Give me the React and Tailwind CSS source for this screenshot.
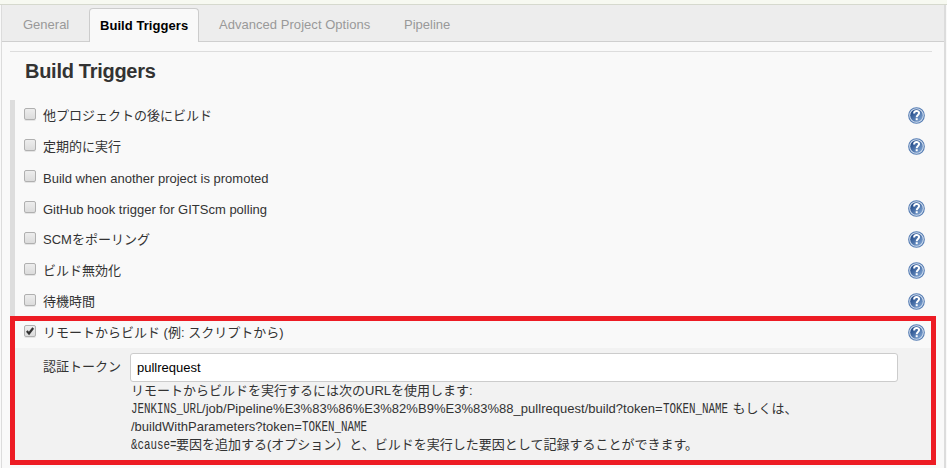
const tabs = [
  { label: 'General', box: 'pl-[21px] w-[87px]' },
  { label: 'Build Triggers', active: true },
  { label: 'Advanced Project Options', box: 'pl-[20px] w-[205px] tracking-[0.04px]' },
  { label: 'Pipeline', box: '' },
];

const triggers = [
  { label: '他プロジェクトの後にビルド', help: true },
  { label: '定期的に実行', help: true },
  { label: 'Build when another project is promoted', help: false, latin: true },
  { label: 'GitHub hook trigger for GITScm polling', help: true, latin: true },
  { label: 'SCMをポーリング', help: true },
  { label: 'ビルド無効化', help: true },
  { label: '待機時間', help: true },
];

function HelpIcon() {
  return (
    <svg className="block h-[17px] w-[17px] shrink-0" viewBox="0 0 17 17" role="img" aria-label="help">
      <defs>
        <linearGradient id="helpFill" x1="0" y1="0" x2="1" y2="1">
          <stop offset="0.1" stopColor="#1d4584" />
          <stop offset="0.9" stopColor="#7ea3d2" />
        </linearGradient>
      </defs>
      <circle cx="8.5" cy="8.5" r="7.8" fill="#d5e0ef" stroke="#567db4" strokeWidth="1.1" />
      <circle cx="8.5" cy="8.5" r="6.3" fill="url(#helpFill)" />
      <path d="M6.1 6.4C6.1 3.3 11.1 3.3 11.1 6.1C11.1 8 8.7 8 8.7 10.2" fill="none" stroke="#fff" strokeWidth="2" />
      <rect x="7.7" y="11.2" width="2" height="2" fill="#fff" />
    </svg>
  );
}

function CheckBox({ checked }) {
  return (
    <span className="block h-[12px] w-[12px] shrink-0 rounded-[2px] border border-[#b0b0b0] bg-linear-to-b from-[#ededed] to-[#dcdcdc] shadow-[0_1px_0_#e4e4e4]">
      {checked && (
        <svg className="block h-[10px] w-[10px]" viewBox="0 0 11 11">
          <path d="M2 5.6L4.4 8.2L9 2.2" fill="none" stroke="#333" strokeWidth="2.4" />
        </svg>
      )}
    </span>
  );
}

function TriggerRow({ label, help, checked, latin }) {
  return (
    <div className="flex h-[31px] items-start pl-[9px] pr-[7px]">
      <div className="pt-[8px]"><CheckBox checked={checked} /></div>
      <span className={'ml-[7px] flex-1 whitespace-nowrap leading-5 ' + (latin ? 'pt-[7px]' : 'pt-[6px]')}>{label}</span>
      {help && <div className="pt-[7px]"><HelpIcon /></div>}
    </div>
  );
}

function Code({ children, width }) {
  return (
    <span className={'inline-block h-[18px] align-top ' + width}>
      <span className="inline-block origin-left scale-x-[0.774] font-['Liberation_Mono',monospace] text-[14px] leading-[18px]">{children}</span>
    </span>
  );
}

export default function App() {
  return (
    <div className="h-[468px] w-[947px] overflow-hidden bg-[#f9f9f9] font-['Liberation_Sans','Noto_Sans_CJK_JP',sans-serif] text-[13px] text-[#333]">
      <div className="h-[5px] border-b border-[#d6d9ce] bg-[#f7f9f1]" />
      <div className="relative ml-px h-[463px] w-[945px] border-l border-r-2 border-[#dcdcdc]">
        <nav className="flex h-[37px] items-end border-b border-[#cfcfcf] bg-[#ededed] text-[#999]">
          {tabs.map((t) =>
            t.active ? (
              <div key={t.label} className="-mb-px flex h-[34px] w-[110px] items-center whitespace-nowrap rounded-t-[4px] border border-b-0 border-[#ccc] bg-[#f9f9f9] pl-[10px] font-bold tracking-[0.06px] text-black">
                {t.label}
              </div>
            ) : (
              <div key={t.label} className={'flex h-[34px] items-center whitespace-nowrap pt-[2px] ' + t.box}>{t.label}</div>
            )
          )}
        </nav>
        <div className="ml-2 mt-[9px] w-[922px] border-t border-[#ddd]">
          <h1 className="pl-[15px] pt-[5px] text-[20px] font-bold leading-[28px] tracking-[-0.28px] text-[#333]">Build Triggers</h1>
          <div className="mt-[15px] h-[217px] border-l-[5px] border-[#ddd]">
            {triggers.map((t) => <TriggerRow key={t.label} {...t} />)}
          </div>
        </div>
        <section className="absolute left-[8px] top-[311px] h-[149px] w-[926px] border-[5px] border-[#ed1c24]">
          <div className="-mr-px -mt-[4px] mb-[4px] h-[27px]">
            <TriggerRow label="リモートからビルド (例: スクリプトから)" help checked />
          </div>
          <div className="flex h-[112px] bg-[#f2f2f2] pl-7 pt-[5px]">
            <div className="w-[87px] whitespace-nowrap pt-[4px] leading-5">認証トークン</div>
            <div>
              <div className="flex h-[29px] w-[768px] items-center rounded-[3px] border border-[#ccc] bg-white pl-[6px] text-black">pullrequest</div>
              <div className="whitespace-nowrap pl-px leading-[18px]">
                <div className="h-[18px]">リモートからビルドを実行するには次のURLを使用します:</div>
                <div className="h-[18px]">
                  <Code width="w-[71px]">JENKINS_URL</Code>
                  <span className="tracking-[0.02px]">/job/Pipeline%E3%83%86%E3%82%B9%E3%83%88_pullrequest/build?token=</span>
                  <Code width="w-[70px]">TOKEN_NAME</Code>
                  <span>もしくは、</span>
                </div>
                <div className="h-[18px]">
                  <span>/buildWithParameters?token=</span>
                  <Code width="w-[69px]">TOKEN_NAME</Code>
                </div>
                <div className="h-[18px]">
                  <Code width="w-[45px]">&amp;cause=</Code>
                  <span>要因を追加する(オプション）と、ビルドを実行した要因として記録することができます。</span>
                </div>
              </div>
            </div>
          </div>
        </section>
      </div>
    </div>
  );
}
